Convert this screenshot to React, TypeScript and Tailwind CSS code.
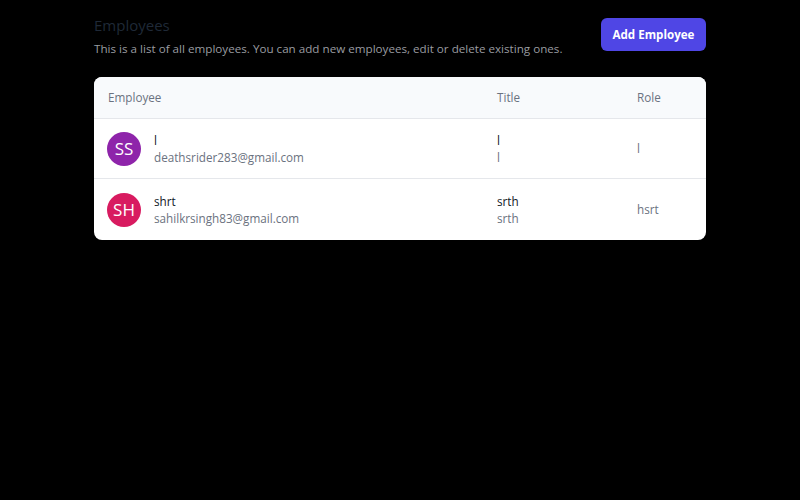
import React from "react";

const rows = [
  { initials: "SS", color: "bg-[#8e24aa]", name: "l", email: "deathsrider283@gmail.com", title: "l", dept: "l", role: "l" },
  { initials: "SH", color: "bg-[#d81b60]", name: "shrt", email: "sahilkrsingh83@gmail.com", title: "srth", dept: "srth", role: "hsrt" },
];

export default function App() {
  return (
    <div className="min-h-[500px] w-full bg-black" style={{ fontFamily: '"Open Sans", sans-serif' }}>
      <div className="mx-auto w-[612px] pt-[14px]">
        <div className="flex items-start justify-between">
          <div>
            <h1 className="text-[15px] leading-[22px] font-normal text-[#1f2937]">Employees</h1>
            <p className="mt-[4px] whitespace-nowrap text-[11.65px] leading-[18px] text-[#9a9ca0]">
              This is a list of all employees. You can add new employees, edit or delete existing ones.
            </p>
          </div>
          <button className="mt-[4px] h-[33px] w-[105px] rounded-md bg-[#4f46e5] text-[11.6px] font-bold text-white">
            Add Employee
          </button>
        </div>
        <div className="mt-[19px] overflow-hidden rounded-lg bg-white">
          <div className="grid h-[42px] grid-cols-[403px_140px_1fr] items-center border-b border-[#e5e7eb] bg-[#f8fafc] text-[11.7px] text-[#6b7280]">
            <div className="pl-[14px]">Employee</div>
            <div>Title</div>
            <div>Role</div>
          </div>
          {rows.map((r, i) => (
            <div
              key={i}
              className={`grid grid-cols-[403px_140px_1fr] items-center ${i === 0 ? "h-[60px] border-b border-[#e5e7eb]" : "h-[61px]"}`}
            >
              <div className="flex items-center pl-[13px]">
                <div className={`flex h-[34px] w-[34px] items-center justify-center rounded-full ${r.color} text-[17px] text-white`}>
                  {r.initials}
                </div>
                <div className="ml-[13px] text-[11.7px] leading-[17px]">
                  <div className="text-[#111827]">{r.name}</div>
                  <div className="text-[#6b7280]">{r.email}</div>
                </div>
              </div>
              <div className="text-[11.7px] leading-[17px]">
                <div className="text-[#111827]">{r.title}</div>
                <div className="text-[#6b7280]">{r.dept}</div>
              </div>
              <div className="text-[11.7px] text-[#6b7280]">{r.role}</div>
            </div>
          ))}
        </div>
      </div>
    </div>
  );
}
